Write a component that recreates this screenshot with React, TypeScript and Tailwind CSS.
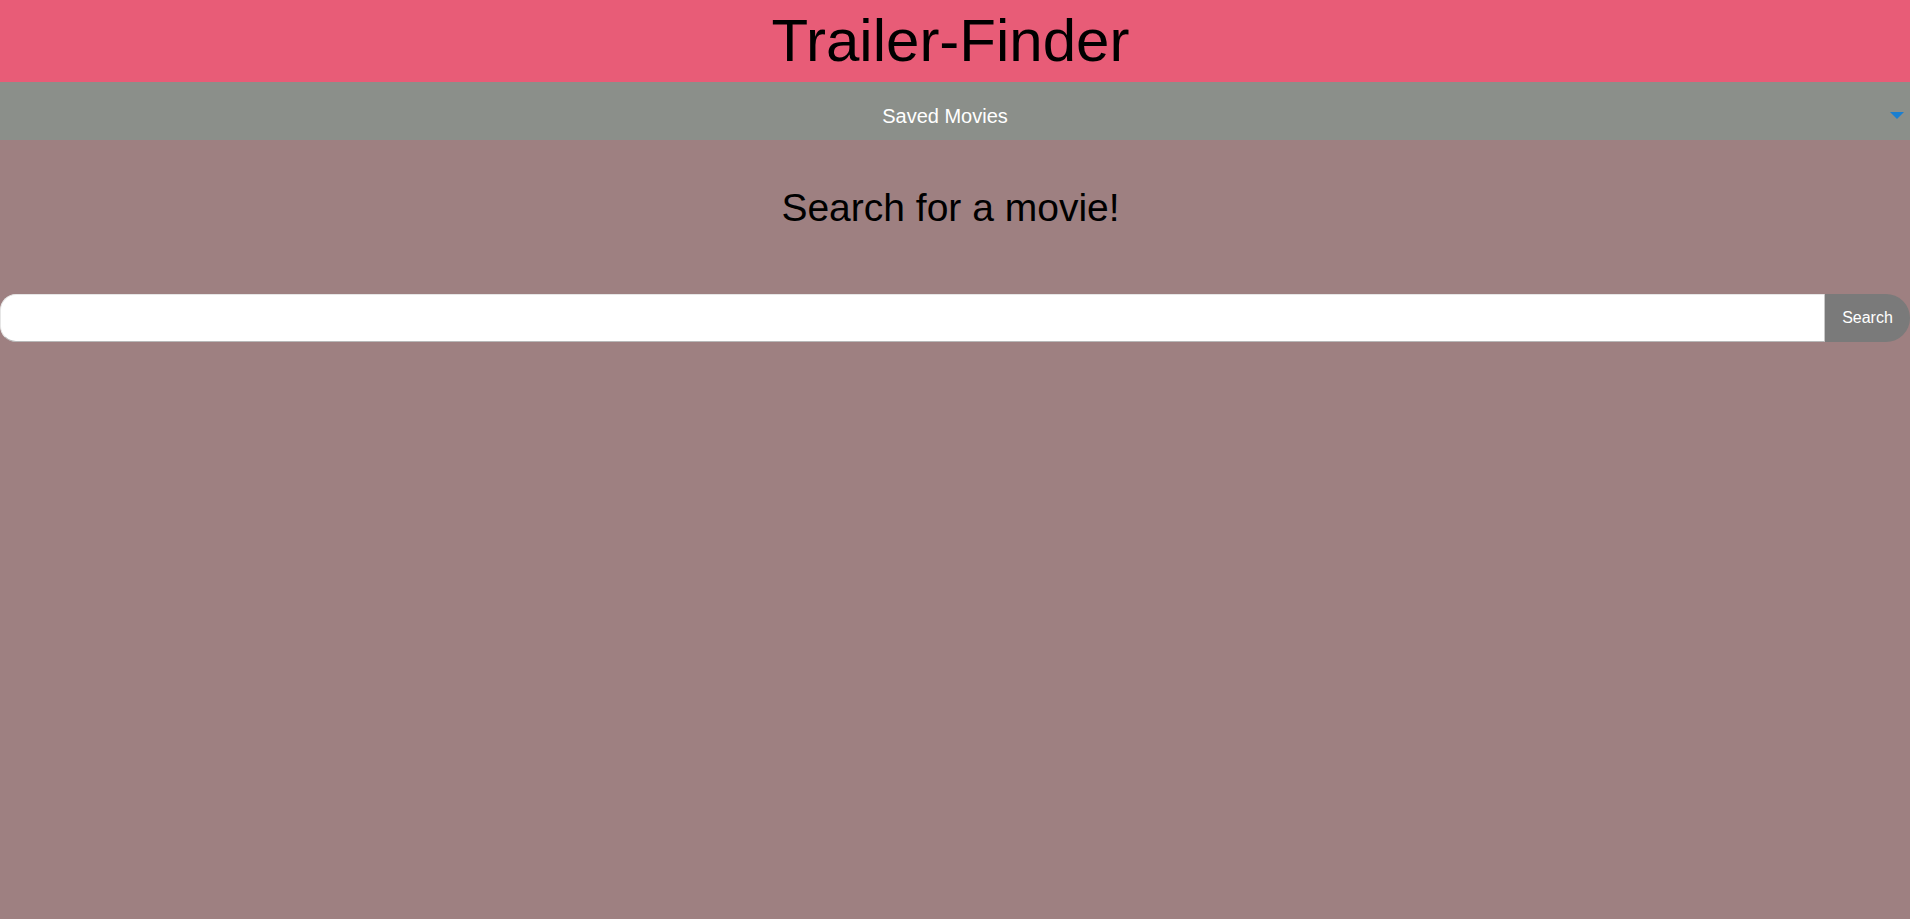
import React from "react";

export default function App() {
  return (
    <div className="min-h-[919px] w-full bg-[#9e8081] font-['Liberation_Sans',Arial,sans-serif]">
      <header className="flex h-[82px] items-center justify-center bg-[#e85c77] pr-[9px]">
        <h1 className="text-[60px] leading-none text-black">Trailer-Finder</h1>
      </header>
      <nav className="relative flex h-[58px] items-center justify-center bg-[#8b8f8a] pt-[9px] pr-[20px]">
        <span className="text-[20px] text-white">Saved Movies</span>
        <svg
          className="absolute right-[6px] top-[30px]"
          width="14"
          height="7"
          viewBox="0 0 14 7"
        >
          <polygon points="0,0 14,0 7,7" fill="#1a7fd1" />
        </svg>
      </nav>
      <main className="flex flex-col items-center">
        <h2 className="mt-[48px] pr-[9px] text-[39px] leading-none text-black">Search for a movie!</h2>
        <div className="mt-[67px] flex h-[48px] w-full">
          <input
            type="text"
            className="h-full flex-1 rounded-l-[16px] border border-t-[#e6e6e6] border-l-[#e6e6e6] border-b-[#b8b8b8] border-r-[#c8c8c8] bg-white px-3 outline-none"
          />
          <button className="h-full w-[85px] rounded-r-[24px] bg-[#7a7a7a] text-[16px] text-white">
            Search
          </button>
        </div>
      </main>
    </div>
  );
}
